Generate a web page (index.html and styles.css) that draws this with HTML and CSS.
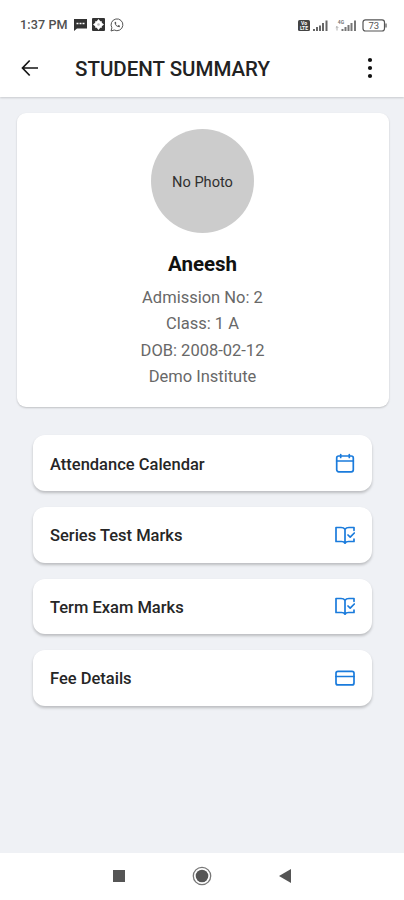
FILE: index.html
```
<!DOCTYPE html>
<html lang="en">
<head>
<meta charset="utf-8">
<title>Student Summary</title>
<link rel="stylesheet" href="styles.css">
</head>
<body>
<div class="screen">
  <header class="top">
    <div class="status">
      <span class="time">1:37 PM</span>
      <svg class="s-chat" width="13" height="12" viewBox="0 0 13 12"><path d="M0 0h13v9.500H3L0 12z" fill="#333"/><path d="M2.500 4.500h2M5.500 4.500h2M8.500 4.500h2" stroke="#fff" stroke-width="1.500"/></svg>
      <svg class="s-app" width="13" height="13" viewBox="0 0 13 13"><rect width="13" height="13" rx="1" fill="#333"/><path d="M6.500 1l1.800 2.200h1.500v1.500L12 6.500 9.800 8.300v1.500H8.300L6.500 12 4.700 9.800H3.200V8.300L1 6.500l2.200-1.800V3.200h1.500z" fill="#fff"/><circle cx="6.500" cy="6.500" r="1.300" fill="#bbb"/></svg>
      <svg class="s-wa" width="14" height="14" viewBox="0 0 14 14" fill="none" stroke="#555"><path d="M1 13l.9-3.200A5.900 5.900 0 1 1 4.200 12z"/><path d="M4.700 4c-.5 2.600 2.200 5.300 5 5.200l.3-1.400-1.500-.7-.8.8C6.700 7.500 6.100 6.800 5.700 6l.7-.8-.6-1.400z" fill="#555" stroke="none"/></svg>
      <span class="grow"></span>
      <svg width="90" height="16" viewBox="0 0 90 16">
        <rect x="0" y="3" width="12" height="11" rx="1.500" fill="#444"/>
        <text x="6" y="8" class="tiny light">Vo</text><text x="6" y="13" class="tiny light">LTE</text>
        <g fill="#666"><rect x="15" y="12" width="2" height="2"/><rect x="18" y="10" width="2" height="4"/><rect x="21" y="8.500" width="2" height="5.500"/><rect x="24" y="6" width="2" height="8"/><rect x="27.500" y="3.500" width="2" height="10.500"/></g>
        <text x="43" y="6.500" class="tiny">4G</text>
        <path d="M39 9.500v4M37.800 10.700L39 9.500l1.200 1.200" stroke="#999" fill="none" stroke-width=".8"/>
        <g fill="#777"><rect x="43.500" y="12" width="2" height="2"/><rect x="46.500" y="10" width="2" height="4"/><rect x="49.500" y="8" width="2" height="6"/><rect x="52.500" y="6" width="2" height="8"/><rect x="56" y="3.500" width="2" height="10.500"/></g>
        <rect x="65" y="2.800" width="21.500" height="11.200" rx="2.500" fill="none" stroke="#555" stroke-width="1.200"/>
        <path d="M88 6.500v4" stroke="#777" stroke-width="1.500"/>
        <text x="75.800" y="11.600" class="charge">73</text>
      </svg>
    </div>
    <div class="bar">
      <svg class="back" width="18" height="18" viewBox="0 0 18 18" fill="none" stroke="#151515" stroke-width="1.700"><path d="M17 9H1.800M8.700 1.500L1.500 9l7.200 7.500"/></svg>
      <h1>STUDENT SUMMARY</h1>
      <svg class="more" width="6" height="22" viewBox="0 0 6 22" fill="#111"><circle cx="3" cy="3" r="2.100"/><circle cx="3" cy="11" r="2.100"/><circle cx="3" cy="19" r="2.100"/></svg>
    </div>
  </header>
  <main>
    <section class="profile">
      <div class="photo"><span>No Photo</span></div>
      <h2>Aneesh</h2>
      <p>Admission No: 2</p>
      <p>Class: 1 A</p>
      <p>DOB: 2008-02-12</p>
      <p>Demo Institute</p>
    </section>
    <nav class="menu">
      <a class="item"><span class="label">Attendance Calendar</span>
        <svg viewBox="0 0 20 20"><rect x="1.700" y="3" width="16.600" height="15.800" rx="2"/><path d="M1.700 8h16.600M5.700 1.500v3M14.300 1.500v3"/></svg></a>
      <a class="item"><span class="label">Series Test Marks</span>
        <svg viewBox="0 0 20 20"><path d="M10 4.300C9 2.800 7.700 2.500 6 2.500H1v14h5.500c1.700 0 2.800.500 3.500 1.700.7-1.200 1.800-1.700 3.500-1.700H19v-2.300M10 4.300C11 2.800 12.300 2.500 14 2.500h5v2.800M10 4.300v13.900M13 10l2.200 2.200L19.300 8"/></svg></a>
      <a class="item"><span class="label">Term Exam Marks</span>
        <svg viewBox="0 0 20 20"><path d="M10 4.300C9 2.800 7.700 2.500 6 2.500H1v14h5.500c1.700 0 2.800.500 3.500 1.700.7-1.200 1.800-1.700 3.500-1.700H19v-2.300M10 4.300C11 2.800 12.300 2.500 14 2.500h5v2.800M10 4.300v13.900M13 10l2.200 2.200L19.300 8"/></svg></a>
      <a class="item"><span class="label">Fee Details</span>
        <svg viewBox="0 0 20 20"><rect x="1" y="3.300" width="18" height="13.600" rx="2"/><path d="M1 8.500h18"/></svg></a>
    </nav>
  </main>
  <footer>
    <svg width="12" height="12" viewBox="0 0 12 12"><rect width="12" height="12" fill="#555"/></svg>
    <svg width="20" height="20" viewBox="0 0 20 20"><circle cx="10" cy="10" r="8.700" fill="none" stroke="#777" stroke-width="1.300"/><circle cx="10" cy="10" r="6.300" fill="#555"/></svg>
    <svg width="12" height="14" viewBox="0 0 12 14"><path d="M12 0v14L0 7z" fill="#555"/></svg>
  </footer>
</div>
</body>
</html>
```
FILE: styles.css
```
* { box-sizing: border-box; }
body { margin: 0; font-family: Roboto, sans-serif; background: #eff1f5; }
h1, h2, p { margin: 0; }
svg { display: block; flex: none; }
.screen { width: 404px; height: 900px; display: flex; flex-direction: column; }
.top { height: 97px; flex: none; background: #fff; box-shadow: 0 1px 2px rgba(0,0,0,.16); }
.status { height: 40px; padding: 9px 16px 0 20px; display: flex; align-items: center; }
.time { font-size: 12.6px; font-weight: 500; color: #505050; letter-spacing: .1px; margin-right: 6px; }
.s-app { margin-left: 5px; }
.s-wa { margin-left: 5px; }
.grow { flex: 1; }
.tiny { font-size: 5px; font-weight: 700; fill: #777; text-anchor: middle; }
.light { fill: #fff; }
.charge { font-size: 9.500px; fill: #555; text-anchor: middle; }
.bar { height: 56px; padding: 0 31px 0 21px; display: flex; align-items: center; }
.bar h1 { flex: 1; margin: 1px 0 0 36px; font-size: 20.5px; font-weight: 500; line-height: 24px; color: #222; white-space: nowrap; }
main { flex: 1; padding: 16px 15px 0 17px; }
.profile { height: 294px; padding: 16px 1px 0 0; background: #fff; border-radius: 9px; box-shadow: 0 1px 2px rgba(0,0,0,.2); display: flex; flex-direction: column; align-items: center; }
.photo { width: 103px; height: 104px; padding-top: 2px; border-radius: 50%; background: #ccc; display: flex; align-items: center; justify-content: center; font-size: 14.6px; color: #303030; }
h2 { margin: 19px 0 9px; font-size: 20.5px; line-height: 24px; font-weight: 700; color: #111; }
.profile p { font-size: 16.5px; line-height: 26.3px; color: #686868; }
.menu { margin: 28.4px 17px 0 16px; display: flex; flex-direction: column; gap: 16px; }
.item { height: 55.6px; padding: 0 17px; background: #fff; border-radius: 12px; box-shadow: 0 2px 3px rgba(0,0,0,.22); display: flex; align-items: center; justify-content: space-between; font-size: 16.5px; font-weight: 500; color: #262626; }
.label { padding-top: 2px; }
.item svg { width: 20px; height: 20px; fill: none; stroke: #1a7bdc; stroke-width: 1.7; stroke-linejoin: round; stroke-linecap: round; }
footer { height: 47px; flex: none; padding: 0 113px 2px 113px; background: #fff; display: flex; align-items: center; justify-content: space-between; }
```
